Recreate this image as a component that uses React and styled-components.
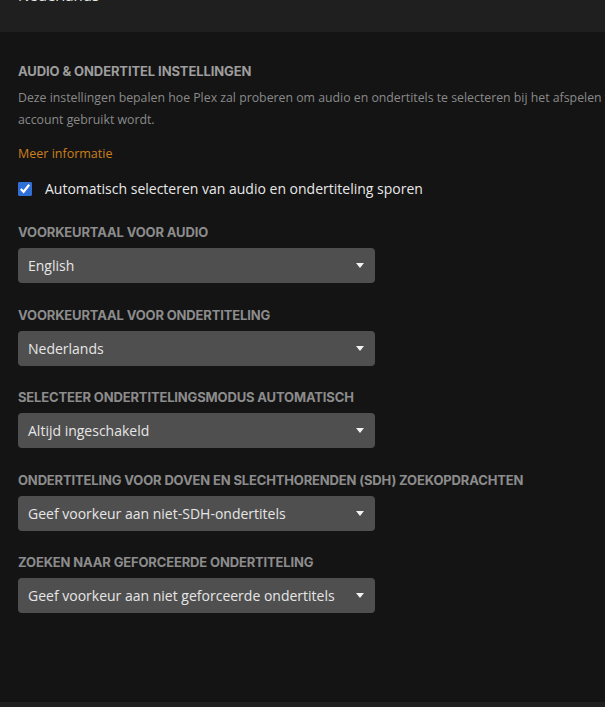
import React from "react";
import styled, { createGlobalStyle } from "styled-components";

const GlobalStyle = createGlobalStyle`
  html, body {
    margin: 0;
    padding: 0;
    background: #141414;
    overflow: hidden;
  }
  body {
    font-family: "Open Sans", "Noto Sans", sans-serif;
  }
`;

const options = [
  {
    label: "Voorkeurtaal voor audio",
    value: "English",
  },
  {
    label: "Voorkeurtaal voor ondertiteling",
    value: "Nederlands",
  },
  {
    label: "Selecteer ondertitelingsmodus automatisch",
    value: "Altijd ingeschakeld",
  },
  {
    label: "Ondertiteling voor doven en slechthorenden (SDH) zoekopdrachten",
    value: "Geef voorkeur aan niet-SDH-ondertitels",
  },
  {
    label: "Zoeken naar geforceerde ondertiteling",
    value: "Geef voorkeur aan niet geforceerde ondertitels",
  },
];

class App extends React.Component {
  constructor(props) {
    super(props);
    this.state = {
      autoSelect: true,
    };
  }

  handleToggle = () => {
    this.setState({ autoSelect: !this.state.autoSelect });
  };

  render() {
    return (
      <Page>
        <GlobalStyle />
        <TopBar>
          <TopValue>Nederlands</TopValue>
        </TopBar>
        <Section>
          <Heading>Audio &amp; ondertitel instellingen</Heading>
          <Description>
            Deze instellingen bepalen hoe Plex zal proberen om audio en ondertitels te selecteren bij het afspelen van media wanneer dit
            <br />
            account gebruikt wordt.
          </Description>
          <MoreLink href="#">Meer informatie</MoreLink>
          <CheckRow>
            <input
              type="checkbox"
              checked={this.state.autoSelect}
              onChange={this.handleToggle}
            />
            <span>Automatisch selecteren van audio en ondertiteling sporen</span>
          </CheckRow>
          {options.map((o) => (
            <Field key={o.label}>
              <FieldLabel>{o.label}</FieldLabel>
              <SelectBox>
                <span>{o.value}</span>
                <Caret />
              </SelectBox>
            </Field>
          ))}
        </Section>
        <BottomBar />
      </Page>
    );
  }
}

const Page = styled.div`
  width: 605px;
  height: 707px;
  display: flex;
  flex-direction: column;
  background: #141414;
  overflow: hidden;
`;

const TopBar = styled.div`
  height: 32px;
  flex-shrink: 0;
  background: #1f1f1f;
  padding: 0 18px;
  overflow: hidden;
`;

const TopValue = styled.div`
  margin-top: -15px;
  font-size: 15px;
  line-height: 20px;
  color: #e6e6e6;
`;

const Section = styled.div`
  flex: 1;
  padding: 29px 0 0 18px;
  width: 900px;
`;

const Heading = styled.h2`
  margin: 0;
  font-family: Inter, "Noto Sans", sans-serif;
  font-weight: 700;
  font-size: 13px;
  line-height: 20px;
  letter-spacing: -0.1px;
  text-transform: uppercase;
  color: #9d9d9d;
`;

const Description = styled.p`
  margin: 6px 0 0;
  font-size: 12.3px;
  line-height: 22px;
  color: #8a8a8a;
`;

const MoreLink = styled.a`
  display: inline-block;
  margin-top: 13px;
  font-size: 12.5px;
  line-height: 20px;
  color: #cc7f1d;
  text-decoration: none;
`;

const CheckRow = styled.label`
  display: flex;
  align-items: center;
  gap: 13px;
  margin-top: 15px;
  padding-bottom: 1.5px;
  font-size: 14px;
  line-height: 20px;
  color: #e8e8e8;
  cursor: pointer;

  input {
    margin: 0;
    width: 14px;
    height: 14px;
    accent-color: #2e6fd8;
  }
`;

const Field = styled.div`
  margin-top: 23.5px;
`;

const FieldLabel = styled.div`
  font-family: Inter, "Noto Sans", sans-serif;
  font-weight: 700;
  font-size: 13px;
  line-height: 16px;
  letter-spacing: -0.15px;
  text-transform: uppercase;
  color: #8c8c8c;
`;

const SelectBox = styled.div`
  margin-top: 8px;
  width: 357px;
  height: 35px;
  box-sizing: border-box;
  padding: 0 10px;
  display: flex;
  align-items: center;
  justify-content: space-between;
  background: #4f4f4f;
  border-radius: 4px;
  font-size: 14px;
  color: #e6e6e6;
  cursor: pointer;
`;

const Caret = styled.span`
  width: 0;
  height: 0;
  margin-right: 1px;
  border-left: 4px solid transparent;
  border-right: 4px solid transparent;
  border-top: 5px solid #f2f2f2;
`;

const BottomBar = styled.div`
  height: 5px;
  flex-shrink: 0;
  background: #202020;
`;

export default App;
